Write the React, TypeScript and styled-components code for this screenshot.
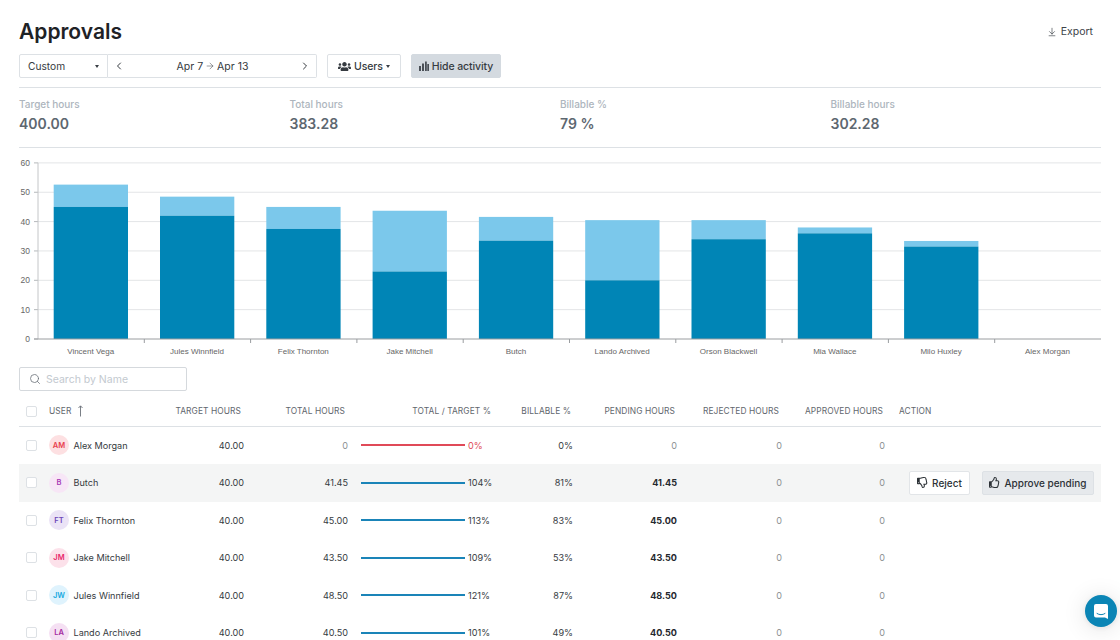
import React from "react";
import styled, { createGlobalStyle } from "styled-components";
import { ChevronLeft, ChevronRight, ArrowRight, ArrowDownToLine, Search } from "lucide-react";
import { FaUsers, FaRegThumbsUp, FaRegThumbsDown } from "react-icons/fa";

const Global = createGlobalStyle`
  html, body { margin: 0; padding: 0; height: 640px; overflow: hidden; background: #fff; }
  body { font-family: Inter, "Liberation Sans", sans-serif; color: #25292e; }
  * { box-sizing: border-box; }
`;

const Page = styled.div`
  width: 1120px;
  height: 640px;
  padding: 17px 19px 0;
  overflow: hidden;
`;
const TitleRow = styled.div`
  display: flex;
  justify-content: space-between;
  align-items: center;
  height: 29px;
  margin-bottom: 8px;
`;
const Title = styled.h1`
  margin: 0;
  font-size: 21px;
  line-height: 29px;
  font-weight: 600;
  color: #1e2226;
`;
const ExportLink = styled.div`
  display: flex;
  align-items: center;
  gap: 4px;
  font-size: 10.5px;
  color: #3d4349;
  padding-right: 8px;
`;
const Toolbar = styled.div`
  display: flex;
  align-items: stretch;
  height: 24px;
`;
const Select = styled.div`
  width: 89px;
  display: flex;
  align-items: center;
  justify-content: space-between;
  padding: 0 8px;
  border: 1px solid #dde1e5;
  border-radius: 2px 0 0 2px;
  font-size: 10.2px;
  color: #363b41;
`;
const Caret = styled.span`
  display: inline-block;
  width: 0;
  height: 0;
  border-left: 2.5px solid transparent;
  border-right: 2.5px solid transparent;
  border-top: 3px solid #3a3f45;
`;
const DateRange = styled.div`
  width: 209px;
  display: flex;
  align-items: center;
  justify-content: space-between;
  padding: 0 5px;
  border: 1px solid #dde1e5;
  border-left: 0;
  border-radius: 0 2px 2px 0;
  font-size: 10.5px;
  color: #363b41;
  margin-right: 10px;
`;
const DateText = styled.span`
  display: flex;
  align-items: center;
  gap: 2px;
  padding-left: 1px;
`;
const ToolButton = styled.div<{ $active?: boolean }>`
  display: flex;
  align-items: center;
  gap: 3px;
  padding: 0 ${p => (p.$active ? 7 : 10)}px;
  margin-right: 10px;
  border: 1px solid ${p => (p.$active ? "#d4dae0" : "#dde1e5")};
  background: ${p => (p.$active ? "#d4dae0" : "#fff")};
  border-radius: 2px;
  font-size: 10.5px;
  font-weight: 500;
  letter-spacing: -0.01em;
  color: #363b41;
`;
const Divider = styled.div`
  height: 1px;
  background: #dde1e5;
`;
const TopDivider = styled(Divider)`
  margin-top: 9px;
`;
const Stats = styled.div`
  display: grid;
  grid-template-columns: repeat(4, 270.5px);
  height: 59px;
  padding-top: 8px;
`;
const StatLabel = styled.div`
  font-size: 10px;
  line-height: 16px;
  font-weight: 500;
  color: #adb5bd;
`;
const StatValue = styled.div`
  font-size: 14px;
  line-height: 23px;
  font-weight: 600;
  color: #5d6770;
`;
const ChartSvg = styled.svg`
  display: block;
  margin-left: -19px;
`;
const SearchBox = styled.div`
  width: 168px;
  height: 24px;
  margin-top: 3px;
  display: flex;
  align-items: center;
  gap: 5px;
  padding: 0 9px;
  border: 1px solid #d5d9dd;
  border-radius: 2px;
  font-size: 10.5px;
  color: #c3c9cf;
`;
const columns = "30px 115px 80px 104px 143px 82px 104px 105px 103px 216px";
const HeadRow = styled.div`
  display: grid;
  grid-template-columns: ${columns};
  align-items: center;
  height: 29.5px;
  margin-top: 6px;
  border-bottom: 1.5px solid #dde1e5;
`;
const Head = styled.div<{ $left?: boolean; $pad?: number }>`
  display: flex;
  align-items: center;
  justify-content: ${p => (p.$left ? "flex-start" : "flex-end")};
  gap: 6px;
  padding-right: ${p => p.$pad ?? 3}px;
  font-size: 8.4px;
  letter-spacing: 0.01em;
  color: #5f666d;
  white-space: nowrap;
`;
const ActionHead = styled(Head)`
  padding-left: 14px;
`;
const Row = styled.div<{ $hover?: boolean }>`
  display: grid;
  grid-template-columns: ${columns};
  align-items: center;
  height: 37.5px;
  background: ${p => (p.$hover ? "#f4f5f5" : "transparent")};
  font-size: 9.1px;
  color: #363b41;
`;
const CheckCell = styled.div`
  padding-left: 6.5px;
  display: flex;
`;
const Check = styled.span`
  width: 11px;
  height: 11px;
  border: 1px solid #dde1e5;
  border-radius: 2px;
  background: #fff;
`;
const UserCell = styled.div`
  display: flex;
  align-items: center;
  gap: 4.5px;
  white-space: nowrap;
`;
const Avatar = styled.span<{ $bg: string; $fg: string }>`
  width: 20px;
  height: 20px;
  border-radius: 50%;
  background: ${p => p.$bg};
  color: ${p => p.$fg};
  display: flex;
  align-items: center;
  justify-content: center;
  font-size: 7.5px;
  font-weight: 600;
`;
const Num = styled.div<{ $bold?: boolean; $muted?: boolean }>`
  text-align: right;
  font-weight: ${p => (p.$bold ? 700 : 400)};
  color: ${p => (p.$bold ? "#25292e" : p.$muted ? "#8c8f92" : "#363b41")};
`;
const ProgressCell = styled.div`
  display: flex;
  align-items: center;
  padding-left: 13px;
  gap: 3px;
`;
const Line = styled.span<{ $red?: boolean }>`
  width: 104px;
  height: 2px;
  flex: none;
  background: ${p => (p.$red ? "#e04a58" : "#1a84b8")};
`;
const Pct = styled.span<{ $red?: boolean }>`
  color: ${p => (p.$red ? "#e04a58" : "#363b41")};
`;
const Actions = styled.div`
  display: flex;
  gap: 12px;
  padding-left: 24px;
`;
const ActionButton = styled.div<{ $primary?: boolean }>`
  display: flex;
  align-items: center;
  justify-content: center;
  gap: 4px;
  height: 24px;
  flex: none;
  white-space: nowrap;
  width: ${p => (p.$primary ? 112 : 61)}px;
  border: 1px solid ${p => (p.$primary ? "#dde1e5" : "#e2e5e8")};
  background: ${p => (p.$primary ? "#e6e9ec" : "#fff")};
  border-radius: 2px;
  font-size: 10px;
  font-weight: 500;
  color: #2c3136;
`;
const Chat = styled.div`
  position: fixed;
  right: 3px;
  bottom: 13px;
  width: 32px;
  height: 32px;
  border-radius: 50%;
  background: #0b85b5;
  display: flex;
  align-items: center;
  justify-content: center;
  box-shadow: 0 1px 6px rgba(0, 0, 0, 0.08), 0 2px 24px rgba(0, 0, 0, 0.12);
`;

const bars: [string, number, number][] = [
  ["Vincent Vega", 45, 52.6],
  ["Jules Winnfield", 42, 48.5],
  ["Felix Thornton", 37.5, 45],
  ["Jake Mitchell", 23, 43.7],
  ["Butch", 33.5, 41.6],
  ["Lando Archived", 20, 40.5],
  ["Orson Blackwell", 34, 40.5],
  ["Mia Wallace", 36, 38],
  ["Milo Huxley", 31.5, 33.4],
  ["Alex Morgan", 0, 0],
];
const Y0 = 191;
const yOf = (v: number) => Y0 - v * 2.935;
const P = 106.3;

function Chart() {
  return (
    <ChartSvg width={1120} height={216} viewBox="0 0 1120 216">
      {[0, 10, 20, 30, 40, 50, 60].map(v => (
        <g key={v}>
          {v > 0 && <line x1={38} x2={1101} y1={yOf(v)} y2={yOf(v)} stroke="#e3e5e7" />}
          <line x1={34} x2={38} y1={yOf(v)} y2={yOf(v)} stroke="#b5b8bb" />
          <text x={30} y={yOf(v) + 3} textAnchor="end" fontFamily="Liberation Sans" fontSize={8.5} fill="#666">{v}</text>
        </g>
      ))}
      <line x1={38} x2={38} y1={yOf(60)} y2={Y0} stroke="#c4c6c8" />
      {bars.map(([name, dark, total], i) => {
        const x = 38 + i * P + 15.7;
        return (
          <g key={name}>
            {total > 0 && <rect x={x} y={yOf(total)} width={74.3} height={(total - dark) * 2.935} fill="#7bc8eb" />}
            {dark > 0 && <rect x={x} y={yOf(dark)} width={74.3} height={dark * 2.935} fill="#0085b6" />}
            <text x={x + 37} y={206} textAnchor="middle" fontFamily="Liberation Sans" fontSize={8} fill="#666">{name}</text>
            {i > 0 && <line x1={38 + i * P} x2={38 + i * P} y1={Y0} y2={Y0 + 4} stroke="#9a9da0" />}
          </g>
        );
      })}
      <line x1={34} x2={1101} y1={Y0} y2={Y0} stroke="#9a9da0" />
    </ChartSvg>
  );
}

const rows = [
  { i: "AM", n: "Alex Morgan", bg: "#fde0e2", fg: "#e8404f", t: "0", pct: "0%", b: "0%", pend: "0", red: true },
  { i: "B", n: "Butch", bg: "#f7e6f6", fg: "#a63ab5", t: "41.45", pct: "104%", b: "81%", pend: "41.45", hover: true },
  { i: "FT", n: "Felix Thornton", bg: "#ebe3f6", fg: "#6d47b8", t: "45.00", pct: "113%", b: "83%", pend: "45.00" },
  { i: "JM", n: "Jake Mitchell", bg: "#fce1ea", fg: "#e8286b", t: "43.50", pct: "109%", b: "53%", pend: "43.50" },
  { i: "JW", n: "Jules Winnfield", bg: "#dff3fd", fg: "#13a8e0", t: "48.50", pct: "121%", b: "87%", pend: "48.50" },
  { i: "LA", n: "Lando Archived", bg: "#f5e0f3", fg: "#a52ca0", t: "40.50", pct: "101%", b: "49%", pend: "40.50" },
];

export default function App() {
  return (
    <Page>
      <Global />
      <TitleRow>
        <Title>Approvals</Title>
        <ExportLink><ArrowDownToLine size={10} strokeWidth={1.6} />Export</ExportLink>
      </TitleRow>
      <Toolbar>
        <Select>Custom<Caret /></Select>
        <DateRange>
          <ChevronLeft size={12} />
          <DateText>Apr 7 <ArrowRight size={10} strokeWidth={1.2} /> Apr 13</DateText>
          <ChevronRight size={12} />
        </DateRange>
        <ToolButton><FaUsers size={13} /> Users<Caret /></ToolButton>
        <ToolButton $active>
          <svg width="10" height="10" viewBox="0 0 10 10" fill="#4a5057">
            <rect x="0" y="5" width="2" height="5" /><rect x="3" y="2.5" width="2" height="7.5" /><rect x="6" y="0.5" width="1.8" height="9.5" /><rect x="8.3" y="3" width="1.7" height="7" />
          </svg>
          Hide activity
        </ToolButton>
      </Toolbar>
      <TopDivider />
      <Stats>
        {[["Target hours", "400.00"], ["Total hours", "383.28"], ["Billable %", "79 %"], ["Billable hours", "302.28"]].map(([l, v]) => (
          <div key={l}>
            <StatLabel>{l}</StatLabel>
            <StatValue>{v}</StatValue>
          </div>
        ))}
      </Stats>
      <Divider />
      <Chart />
      <SearchBox><Search size={12} color="#6b7178" strokeWidth={1.6} />Search by Name</SearchBox>
      <HeadRow>
        <CheckCell><Check /></CheckCell>
        <Head $left>
          USER
          <svg width="7" height="12" viewBox="0 0 7 12" fill="none" stroke="#6b7178" strokeWidth="0.9">
            <path d="M3.5 11.5V1M1.5 3l2-2.2 2 2.2" />
          </svg>
        </Head>
        <Head>TARGET HOURS</Head>
        <Head>TOTAL HOURS</Head>
        <Head $pad={0}>TOTAL / TARGET %</Head>
        <Head $pad={2}>BILLABLE %</Head>
        <Head $pad={2}>PENDING HOURS</Head>
        <Head>REJECTED HOURS</Head>
        <Head $pad={2}>APPROVED HOURS</Head>
        <ActionHead $left>ACTION</ActionHead>
      </HeadRow>
      {rows.map(r => (
        <Row key={r.n} $hover={r.hover}>
          <CheckCell><Check /></CheckCell>
          <UserCell>
            <Avatar $bg={r.bg} $fg={r.fg}>{r.i}</Avatar>
            {r.n}
          </UserCell>
          <Num>40.00</Num>
          <Num $muted={r.red}>{r.t}</Num>
          <ProgressCell>
            <Line $red={r.red} />
            <Pct $red={r.red}>{r.pct}</Pct>
          </ProgressCell>
          <Num>{r.b}</Num>
          <Num $bold={!r.red} $muted={r.red}>{r.pend}</Num>
          <Num $muted>0</Num>
          <Num $muted>0</Num>
          <Actions>
            {r.hover && (
              <>
                <ActionButton><FaRegThumbsDown size={11} />Reject</ActionButton>
                <ActionButton $primary><FaRegThumbsUp size={11} />Approve pending</ActionButton>
              </>
            )}
          </Actions>
        </Row>
      ))}
      <Chat>
        <svg width="16" height="17" viewBox="0 0 16 17">
          <path d="M3 1h10a2 2 0 0 1 2 2v13l-3-1.6H3a2 2 0 0 1-2-2V3a2 2 0 0 1 2-2z" fill="#fff" />
          <path d="M4 10.5c2.4 1.6 5.6 1.6 8 0" fill="none" stroke="#0b85b5" strokeWidth="1" strokeLinecap="round" />
        </svg>
      </Chat>
    </Page>
  );
}
